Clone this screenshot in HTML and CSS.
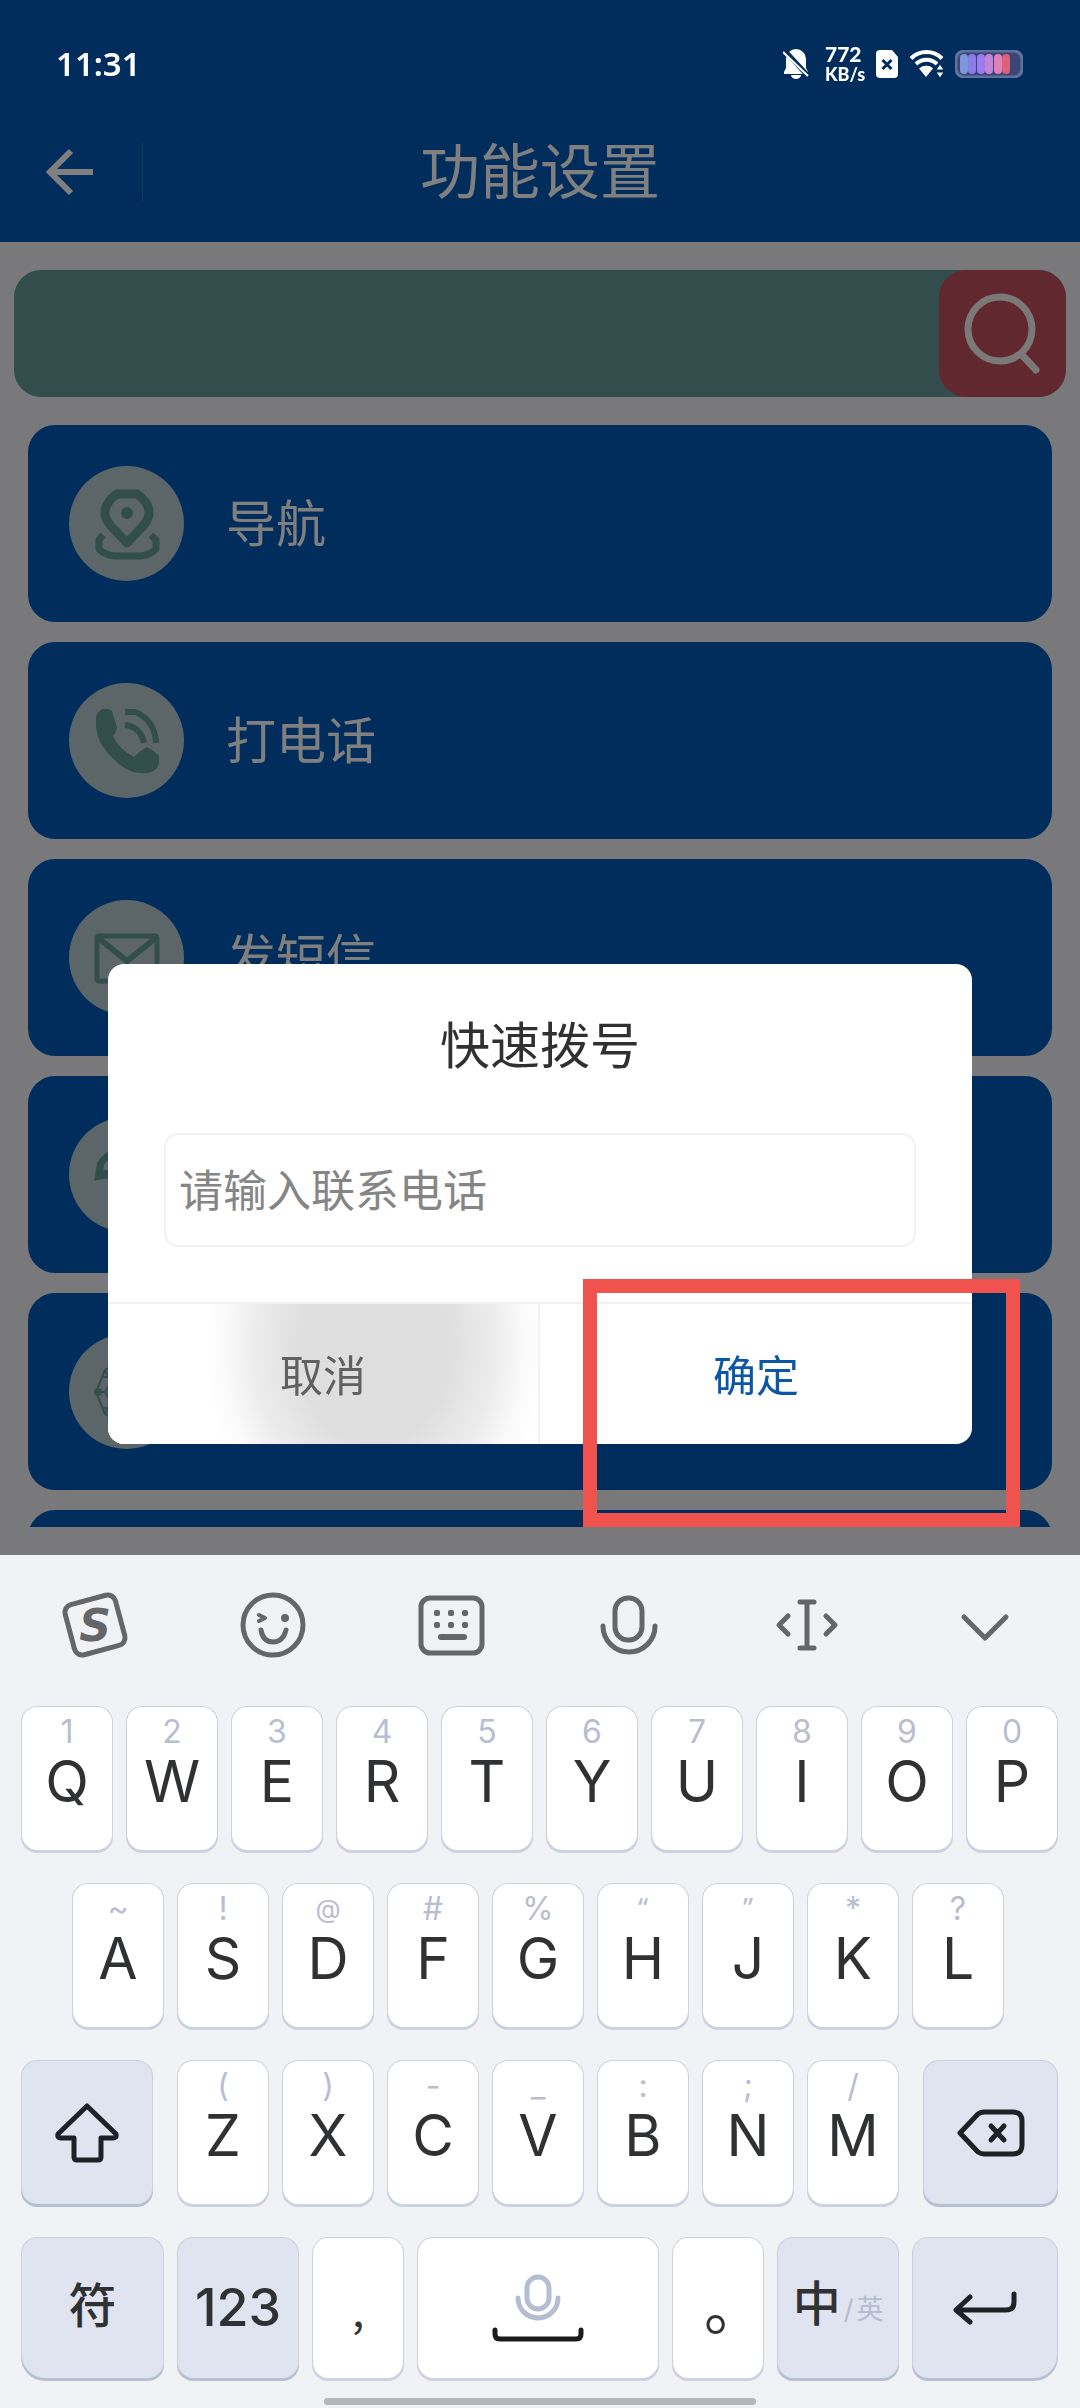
FILE: index.html
```html
<!DOCTYPE html>
<html lang="zh-CN">
<head>
<meta charset="utf-8">
<meta name="viewport" content="width=device-width, initial-scale=1">
<title>功能设置</title>
<link rel="stylesheet" href="styles.css">
</head>
<body>
<div class="screen">
  <header class="header">
    <div class="status">
      <span class="clock">11:31</span>
      <div class="status-icons">
        <svg width="26" height="32" viewBox="0 0 26 32"><path d="M13 1a10 10 0 0 0-10 10v9l-2 4v2h24v-2l-2-4v-9A10 10 0 0 0 13 1zM8 27a5 4 0 0 0 10 0z" fill="#fff"/><path d="M1 2l25 27" stroke="#002d5c" stroke-width="5"/><path d="M0 4l25 24" stroke="#fff" stroke-width="2"/></svg>
        <span class="speed"><b class="speed-num">772</b><b class="speed-unit">KB/s</b></span>
        <svg width="24" height="30" viewBox="0 0 24 30"><path d="M5 1h12l6 7v17a4 4 0 0 1-4 4H5a4 4 0 0 1-4-4V5a4 4 0 0 1 4-4z" fill="#fff"/><path d="M7.500 11l9 9m0-9l-9 9" stroke="#002d5c" stroke-width="3"/></svg>
        <svg width="36" height="28" viewBox="0 0 36 28"><g fill="none" stroke="#fff" stroke-width="4"><path d="M2 8.500a22 22 0 0 1 31 0"/><path d="M7 14a15 15 0 0 1 21 0"/></g><path d="M10 18.500a10 10 0 0 1 14 0l-7 8.500z" fill="#fff"/><path d="M12 19a8 8 0 0 1 11 0" stroke="#fff" stroke-width="2" fill="none"/><path d="M27 20l4-6 4 6zm0 2h8l-4 6z" fill="#fff" stroke="#002d5c"/></svg>
        <svg width="68" height="28" viewBox="0 0 68 28"><rect x="1" y="1" width="66" height="26" rx="8" fill="#3a4678" stroke="#5f719c" stroke-width="3"/><g><rect x="5" y="4" width="8" height="20" rx="4" fill="#7f96dc"/><rect x="13" y="4" width="8" height="20" rx="4" fill="#8a7de8"/><rect x="22" y="4" width="8" height="20" rx="4" fill="#9b7cf0"/><rect x="30" y="4" width="8" height="20" rx="4" fill="#c583da"/><rect x="39" y="4" width="8" height="20" rx="4" fill="#e07fb8"/><rect x="47" y="4" width="8" height="20" rx="4" fill="#d9627a"/></g></svg>
      </div>
    </div>
    <div class="titlebar">
      <button class="back" type="button" aria-label="返回"><svg width="48" height="48" viewBox="0 0 48 48" fill="none" stroke="#fff" stroke-width="6"><path d="M25 3L4 24l21 21M4 24h43"/></svg></button>
      <h1 class="title">功能设置</h1>
    </div>
  </header>

  <main class="content">
    <form class="search">
      <input class="search-input" type="search" aria-label="搜索">
      <button class="search-button" type="button" aria-label="搜索"><svg width="127" height="127" viewBox="0 0 127 127" fill="none" stroke="#f6f2ee" stroke-width="7" stroke-linecap="round"><circle cx="61" cy="59" r="32"/><path d="M84 86l13 14"/></svg></button>
    </form>
    <ul class="cards">
      <li><a class="card" href="#"><svg class="badge" viewBox="0 0 115 115"><g fill="none" stroke="#659c95" stroke-width="9" stroke-linejoin="round"><path d="M58 77L42 60Q36 53 36 47V44Q38 35 48 28H68Q78 35 80 44V48Q79 55 73 61Z"/><path d="M34 69l-4 5v9q6 6 15 7h27q9-1 15-7v-9l-5-5" stroke-width="7"/></g><circle cx="58" cy="47" r="6" fill="#659c95"/></svg>导航</a></li>
      <li><a class="card" href="#"><svg class="badge" viewBox="0 0 115 115"><path d="M33 26Q28 29 27 34V44Q28 52 31 59 37 70 51 82 60 89 71 90 80 91 86 87 90 84 90 79V73Q86 68 78 64 72 67 65 74 50 66 44 53 47 50 48 44L43 28Q39 25 33 26Z" fill="#659c95"/><g fill="none" stroke="#659c95" stroke-width="6"><path d="M56 29h10q20 8 21 31"/><path d="M56 42q16 2 19 18"/></g></svg>打电话</a></li>
      <li><a class="card" href="#"><svg class="badge" viewBox="0 0 115 115" fill="none" stroke="#659c95" stroke-width="5"><rect x="28" y="36" width="60" height="45" rx="2"/><path d="M28 37l30 24 30-24" stroke-width="6"/></svg>发短信</a></li>
      <li><a class="card" href="#"><svg class="badge" viewBox="0 0 115 115"><path d="M25 64L28 46Q32 39 40 34H75Q84 38 87 46L90 64Q58 56 25 64Z" fill="#659c95"/><path d="M36 46l6-5v12h-8z" fill="#b8ccd0"/></svg>打车</a></li>
      <li><a class="card" href="#"><svg class="badge" viewBox="0 0 115 115" fill="none" stroke="#659c95" stroke-width="2"><path d="M27 58L36 36Q58 20 79 36L89 58 79 80Q58 96 36 80ZM27 58H36L42 48 36 36M36 58l6 10-6 12M42 48H74M42 68H74M34 43H80M34 74H80"/><ellipse cx="58" cy="58" rx="15" ry="30"/><circle cx="29" cy="58" r="3"/></svg>浏览网页</a></li>
      <li><a class="card" href="#"></a></li>
    </ul>
  </main>

  <section class="keyboard" aria-label="键盘">
    <div class="tools">
      <button class="tool" type="button" aria-label="输入法"><svg width="68" height="68" viewBox="0 0 68 68"><rect x="8" y="8" width="52" height="52" rx="8" fill="none" stroke="#65666a" stroke-width="5" transform="rotate(-15 34 34)"/><text class="logo-letter" x="34" y="50" text-anchor="middle">S</text></svg></button>
      <button class="tool" type="button" aria-label="表情"><svg width="68" height="68" viewBox="0 0 68 68" fill="none" stroke="#65666a" stroke-width="5" stroke-linecap="round"><circle cx="34" cy="34" r="30"/><path d="M22 39q2 12 12 12t13-12"/><circle cx="46" cy="27" r="4" fill="#65666a" stroke="none"/><path d="M20 24l6 3-6 3" stroke-width="4" stroke-linejoin="round"/></svg></button>
      <button class="tool" type="button" aria-label="键盘布局"><svg width="68" height="68" viewBox="0 0 68 68" fill="none" stroke="#65666a" stroke-width="5" stroke-linecap="round"><rect x="4" y="7" width="61" height="55" rx="9"/><path d="M24 46h23" stroke-width="6"/><g fill="#65666a" stroke="none"><rect x="17" y="19" width="6" height="6" rx="2"/><rect x="31" y="19" width="6" height="6" rx="2"/><rect x="45" y="19" width="6" height="6" rx="2"/><rect x="17" y="31" width="6" height="6" rx="2"/><rect x="31" y="31" width="6" height="6" rx="2"/><rect x="45" y="31" width="6" height="6" rx="2"/></g></svg></button>
      <button class="tool" type="button" aria-label="语音"><svg width="68" height="68" viewBox="0 0 68 68" fill="none" stroke="#65666a" stroke-width="5" stroke-linecap="round"><rect x="20" y="7" width="27" height="42" rx="13"/><path d="M8 35a26 26 0 0 0 52 0"/></svg></button>
      <button class="tool" type="button" aria-label="移动光标"><svg width="68" height="68" viewBox="0 0 68 68" fill="none" stroke="#65666a" stroke-width="5" stroke-linecap="round" stroke-linejoin="round"><path d="M34 11v46M27 11h14M27 57h14M15 25l-9 9 9 9M53 25l9 9-9 9"/></svg></button>
      <button class="tool" type="button" aria-label="收起键盘"><svg width="68" height="68" viewBox="0 0 68 68" fill="none" stroke="#65666a" stroke-width="5" stroke-linecap="round" stroke-linejoin="round"><path d="M13 26l21 21 21-21"/></svg></button>
    </div>
    <div class="rows">
      <div class="row">
        <button class="key" type="button"><span class="hint">1</span>Q</button>
        <button class="key" type="button"><span class="hint">2</span>W</button>
        <button class="key" type="button"><span class="hint">3</span>E</button>
        <button class="key" type="button"><span class="hint">4</span>R</button>
        <button class="key" type="button"><span class="hint">5</span>T</button>
        <button class="key" type="button"><span class="hint">6</span>Y</button>
        <button class="key" type="button"><span class="hint">7</span>U</button>
        <button class="key" type="button"><span class="hint">8</span>I</button>
        <button class="key" type="button"><span class="hint">9</span>O</button>
        <button class="key" type="button"><span class="hint">0</span>P</button>
      </div>
      <div class="row row-home">
        <button class="key" type="button"><span class="hint">~</span>A</button>
        <button class="key" type="button"><span class="hint">!</span>S</button>
        <button class="key" type="button"><span class="hint hint-symbol">@</span>D</button>
        <button class="key" type="button"><span class="hint">#</span>F</button>
        <button class="key" type="button"><span class="hint">%</span>G</button>
        <button class="key" type="button"><span class="hint hint-quote">“</span>H</button>
        <button class="key" type="button"><span class="hint hint-quote">”</span>J</button>
        <button class="key" type="button"><span class="hint">*</span>K</button>
        <button class="key" type="button"><span class="hint">?</span>L</button>
      </div>
      <div class="row row-shift">
        <button class="key key-fn" type="button" aria-label="大写"><svg width="64" height="60" viewBox="0 0 64 60" fill="none" stroke="#1e2126" stroke-width="5" stroke-linejoin="round"><path d="M32 3L3 31Q2 35 6 35H19V54Q19 57 22 57H43Q46 57 46 54V35H58Q62 35 61 31Z"/></svg></button>
        <div class="letters">
          <button class="key" type="button"><span class="hint">(</span>Z</button>
          <button class="key" type="button"><span class="hint">)</span>X</button>
          <button class="key" type="button"><span class="hint">-</span>C</button>
          <button class="key" type="button"><span class="hint">_</span>V</button>
          <button class="key" type="button"><span class="hint">:</span>B</button>
          <button class="key" type="button"><span class="hint">;</span>N</button>
          <button class="key" type="button"><span class="hint">/</span>M</button>
        </div>
        <button class="key key-fn" type="button" aria-label="删除"><svg width="68" height="48" viewBox="0 0 68 48" fill="none" stroke="#1e2126" stroke-width="5" stroke-linejoin="round" stroke-linecap="round"><path d="M3 24L21 5Q24 3 27 3H56Q65 3 65 12V36Q65 45 56 45H27Q24 45 21 43Z"/><path d="M34 17l13 14m0-14L34 31"/></svg></button>
      </div>
      <div class="row row-bottom">
        <button class="key key-fn key-cjk" type="button">符</button>
        <button class="key key-fn key-num" type="button">123</button>
        <button class="key key-comma" type="button">,</button>
        <button class="key key-space" type="button" aria-label="空格"><svg width="92" height="68" viewBox="0 0 92 68" fill="none" stroke-width="5" stroke-linecap="round"><g stroke="#b4bdd2"><rect x="35" y="3" width="22" height="32" rx="11"/><path d="M26 24a20 20 0 0 0 40 0"/></g><path d="M3 56v4q0 5 5 5h76q5 0 5-5v-4" stroke="#1b1c1e"/></svg></button>
        <button class="key key-stop" type="button">。</button>
        <button class="key key-fn key-lang" type="button">中<span class="lang-alt">/</span><span class="lang-alt">英</span></button>
        <button class="key key-fn" type="button" aria-label="换行"><svg width="64" height="36" viewBox="0 0 64 36" fill="none" stroke="#1e2126" stroke-width="5" stroke-linejoin="round" stroke-linecap="round"><path d="M61 4v8q0 8-8 8H4M17 7L3 20l14 12"/></svg></button>
      </div>
    </div>
    <div class="home-bar"></div>
  </section>

  <div class="scrim">
    <div class="dialog" role="dialog" aria-labelledby="dialog-title">
      <h2 class="dialog-title" id="dialog-title">快速拨号</h2>
      <input class="phone" type="tel" placeholder="请输入联系电话" aria-label="联系电话">
      <div class="actions">
        <button class="action action-cancel" type="button">取消</button>
        <button class="action action-ok" type="button">确定</button>
        <span class="marker"></span>
      </div>
    </div>
  </div>
</div>
</body>
</html>
```
FILE: styles.css
```css
* { box-sizing: border-box; }

body {
  margin: 0;
  background: #f2f2f6;
  font-family: Inter, "Noto Sans CJK SC", sans-serif;
}

button, input {
  margin: 0;
  padding: 0;
  border: 0;
  font: inherit;
  color: inherit;
  background: none;
}

svg { display: block; flex: none; }

.screen {
  display: flex;
  flex-direction: column;
  height: 100vh;
}

/* header */
.header { background: #005ab8; }

.status {
  position: relative;
  z-index: 3;
  display: flex;
  align-items: center;
  justify-content: space-between;
  padding: 40px 57px 0 56px;
  height: 88px;
  color: #fff;
}

.clock {
  font: 600 33px/48px "Noto Sans", sans-serif;
}

.status-icons { display: flex; align-items: center; gap: 10px; }

.speed {
  display: flex;
  flex-direction: column;
  width: 40px;
  margin-left: 6px;
  font-family: Lato, sans-serif;
  font-weight: 700;
}
.speed-num { font-size: 21px; line-height: 21px; }
.speed-unit { font-size: 18px; line-height: 21px; }

.titlebar {
  display: grid;
  grid-template-columns: 143px 1fr 143px;
  align-items: center;
  height: 154px;
  padding-top: 14px;
  color: #fff;
}

.back {
  display: flex;
  align-items: center;
  height: 58px;
  padding-left: 46px;
  border-right: 1px solid #2c71bd;
}

.title {
  margin: 0;
  font-size: 60px;
  font-weight: 400;
  line-height: 72px;
  text-align: center;
}

/* feature list */
.content {
  flex: 1;
  display: flex;
  flex-direction: column;
  gap: 28px;
  min-height: 0;
  padding: 28px 14px;
}

.search {
  display: flex;
  flex: none;
  border-radius: 27px;
  background: #669a99;
  overflow: hidden;
}
.search-input { flex: 1; min-width: 0; padding: 0 28px; font-size: 50px; }
.search-button { border-radius: 27px; background: #c2525e; }

.cards {
  flex: 1;
  display: flex;
  flex-direction: column;
  gap: 20px;
  min-height: 0;
  margin: 0;
  padding: 0 14px;
  overflow: hidden;
  list-style: none;
}

.card {
  display: flex;
  align-items: center;
  gap: 42px;
  height: 197px;
  padding: 0 41px;
  border-radius: 27px;
  background: #005ab8;
  color: #fff;
  font-size: 50px;
  line-height: 60px;
  text-decoration: none;
}

.badge {
  width: 115px;
  height: 115px;
  border-radius: 50%;
  background: #b8ccd0;
}

/* dialog */
.scrim {
  position: fixed;
  inset: 0;
  z-index: 2;
  display: flex;
  align-items: center;
  justify-content: center;
  background: rgba(0, 0, 0, 0.5);
}

.dialog {
  display: flex;
  flex-direction: column;
  width: 80%;
  border-radius: 16px;
  background: #fff;
}

.dialog-title {
  margin: 52px 0 57px;
  color: #303030;
  font-size: 50px;
  font-weight: 400;
  line-height: 60px;
  text-align: center;
}

.phone {
  height: 114px;
  margin: 0 56px 55px;
  padding: 2px 13px 0;
  border: 2px solid #f1f1f1;
  border-radius: 14px;
  color: #303030;
  font-size: 44px;
}
.phone::placeholder { color: #858585; opacity: 1; }

.actions {
  position: relative;
  display: grid;
  grid-template-columns: 1fr 1fr;
  border-top: 2px solid #f1f1f1;
}

.action { height: 140px; padding-top: 4px; font-size: 43px; line-height: 52px; }

.action-cancel {
  border-right: 2px solid #f1f1f1;
  border-bottom-left-radius: 16px;
  color: #606060;
  background: radial-gradient(ellipse 170px 220px at 62% 30%, #dedede 0, #dfdfdf 45%, #ececec 70%, #fafafa 88%, #fff 100%);
}

.action-ok { color: #0b57a6; }

/* highlight box around the confirm action */
.marker {
  position: absolute;
  top: -25px;
  right: -48px;
  bottom: -83px;
  left: 475px;
  border: 14px solid #f0524d;
  pointer-events: none;
}

/* keyboard */
.keyboard {
  position: relative;
  z-index: 3;
  flex: none;
  background: #f1f2f6;
}

.tools {
  display: grid;
  grid-template-columns: repeat(6, 1fr);
  padding: 36px 6px 47px;
}
.tool { display: flex; justify-content: center; }

.logo-letter {
  fill: #65666a;
  font: italic 700 44px "DejaVu Sans", sans-serif;
}

.rows {
  display: flex;
  flex-direction: column;
  gap: 33px;
  padding: 0 22px 0 21px;
}

.row, .letters { display: flex; gap: 13px; }
.row > .key, .letters > .key { flex: 1; min-width: 0; }
.row-home { padding: 0 54px 0 51px; }
.row-shift { display: grid; grid-template-columns: 132fr 722fr 135fr; gap: 24px; }
.row-bottom { display: grid; grid-template-columns: 143fr 122fr 92fr 242fr 92fr 122fr 146fr; }

.key {
  display: flex;
  flex-direction: column;
  align-items: center;
  height: 144px;
  padding-top: 7px;
  border: 1px solid #cdd1db;
  border-bottom: 0;
  border-radius: 16px;
  background: #fff;
  box-shadow: 0 3px 0 #ccd2e0;
  color: #303133;
  font-size: 57px;
  line-height: 56px;
}

.hint {
  height: 40px;
  color: #b9bdcf;
  font-size: 32px;
  line-height: 36px;
}
.hint-symbol { font-size: 26px; }
.hint-quote { font-family: "Noto Sans", sans-serif; font-size: 28px; line-height: 32px; }

.key-fn {
  justify-content: center;
  padding: 0;
  background: #dfe4f0;
  box-shadow: 0 3px 0 #b7bfd2;
}

.row-bottom .key { height: 141px; justify-content: center; padding: 0; }
.row-bottom .key:first-child { border-bottom-left-radius: 24px; }
.row-bottom .key:last-child { border-bottom-right-radius: 24px; }

.row-bottom .key-cjk { font-size: 48px; font-weight: 500; padding-bottom: 4px; }
.row-bottom .key-num { font-size: 52px; font-weight: 500; }
.row-bottom .key-comma { font-family: "Noto Sans CJK SC", sans-serif; font-size: 44px; }
.row-bottom .key-stop { padding-left: 32px; font-size: 60px; }
.row-bottom .key-lang {
  flex-direction: row;
  align-items: center;
  gap: 3px;
  font-size: 48px;
  font-weight: 500;
  padding-bottom: 8px;
}
.lang-alt { padding-top: 12px; color: #b4bdd2; font-size: 27px; font-weight: 400; }

.home-bar {
  width: 40%;
  height: 7px;
  margin: 20px auto 3px;
  border-radius: 4px;
  background: #b5b6b9;
}
```
